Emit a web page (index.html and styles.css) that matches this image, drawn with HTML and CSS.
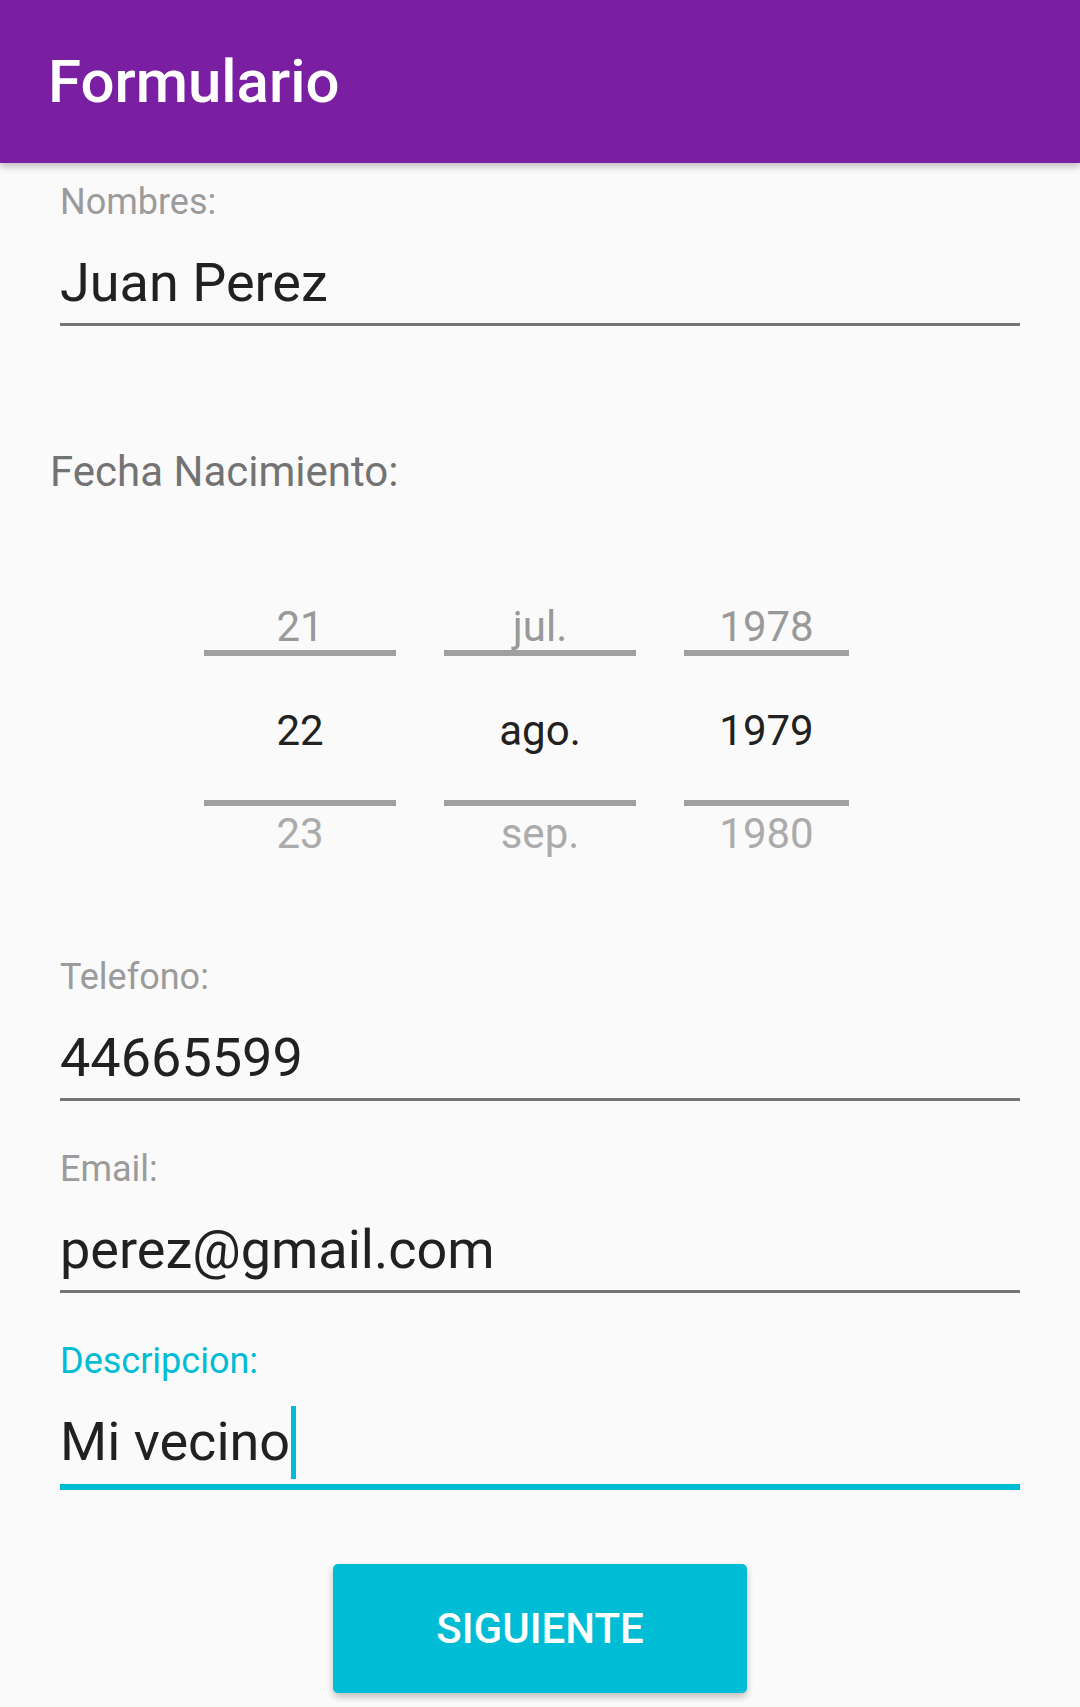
FILE: index.html
```html
<!DOCTYPE html>
<html lang="es">
<head>
<meta charset="utf-8">
<title>Formulario</title>
<link rel="stylesheet" href="styles.css">
</head>
<body>
<header class="appbar"><h1 class="appbar-title">Formulario</h1></header>
<main class="form">
  <div class="field field-first">
    <div class="field-label">Nombres:</div>
    <div class="field-input">Juan Perez</div>
  </div>

  <section class="date-section">
    <div class="date-label">Fecha Nacimiento:</div>
    <div class="picker">
      <div class="picker-col col-day">
        <div class="cell cell-prev">21</div>
        <div class="divider"></div>
        <div class="cell cell-current">22</div>
        <div class="divider"></div>
        <div class="cell cell-next">23</div>
      </div>
      <div class="picker-col col-month">
        <div class="cell cell-prev">jul.</div>
        <div class="divider"></div>
        <div class="cell cell-current">ago.</div>
        <div class="divider"></div>
        <div class="cell cell-next">sep.</div>
      </div>
      <div class="picker-col col-year">
        <div class="cell cell-prev">1978</div>
        <div class="divider"></div>
        <div class="cell cell-current">1979</div>
        <div class="divider"></div>
        <div class="cell cell-next">1980</div>
      </div>
    </div>
  </section>

  <div class="field field-phone">
    <div class="field-label">Telefono:</div>
    <div class="field-input">44665599</div>
  </div>

  <div class="field field-gap">
    <div class="field-label">Email:</div>
    <div class="field-input">perez@gmail.com</div>
  </div>

  <div class="field field-gap field-focused">
    <div class="field-label">Descripcion:</div>
    <div class="field-input">Mi vecino<span class="cursor"></span></div>
  </div>

  <button class="btn-next" type="button">SIGUIENTE</button>
</main>
</body>
</html>
```

FILE: styles.css
```css
* {
  box-sizing: border-box;
}

html, body {
  margin: 0;
  padding: 0;
}

body {
  background: #fafafa;
  font-family: Roboto, "Noto Sans", "Liberation Sans", sans-serif;
  color: #212121;
  width: 1080px;
  height: 1707px;
  overflow: hidden;
}

.appbar {
  position: relative;
  z-index: 2;
  height: 163px;
  background: #7b1fa2;
  box-shadow: 0 3px 8px rgba(0, 0, 0, 0.28);
  display: flex;
  align-items: center;
  padding-left: 48px;
}

.appbar-title {
  margin: 0;
  color: #ffffff;
  font-size: 60px;
  font-weight: 500;
  line-height: 163px;
}

.form {
  display: flex;
  flex-direction: column;
}

.field {
  margin: 0 60px;
  display: flex;
  flex-direction: column;
}

.field-first {
  margin-top: 15px;
}

.field-phone {
  margin-top: 92px;
}

.field-gap {
  margin-top: 44px;
}

.field-label {
  font-size: 36px;
  line-height: 48px;
  height: 48px;
  color: #9b9b9b;
}

.field-input {
  font-size: 54px;
  line-height: 64px;
  padding-top: 25px;
  padding-bottom: 8px;
  border-bottom: 3px solid #757575;
  color: #212121;
  white-space: nowrap;
}

.field-focused .field-label {
  color: #00bcd4;
}

.field-focused .field-input {
  border-bottom: 6px solid #00bcd4;
}

.cursor {
  display: inline-block;
  width: 5px;
  height: 73px;
  margin-left: 1px;
  margin-top: -7px;
  margin-bottom: -3px;
  vertical-align: -16px;
  background: #00bcd4;
}

.date-section {
  margin-top: 118px;
  display: flex;
  flex-direction: column;
}

.date-label {
  padding-left: 50px;
  font-size: 42px;
  line-height: 56px;
  height: 56px;
  color: #737373;
}

.picker {
  margin-top: 104px;
  padding-left: 204px;
  display: flex;
  gap: 48px;
}

.picker-col {
  display: flex;
  flex-direction: column;
  width: 192px;
  text-align: center;
  font-size: 42px;
}

.col-year {
  width: 165px;
}

.cell {
  white-space: nowrap;
}

.cell-prev {
  height: 46px;
  line-height: 46px;
  color: #999999;
}

.cell-current {
  height: 144px;
  padding-top: 5px;
  line-height: 139px;
  color: #212121;
}

.cell-next {
  height: 55px;
  line-height: 55px;
  color: #ababab;
}

.divider {
  height: 6px;
  background: #a0a0a0;
}

.btn-next {
  display: block;
  margin: 74px auto 0;
  width: 414px;
  height: 129px;
  border: none;
  border-radius: 5px;
  background: #00bcd4;
  color: #ffffff;
  font-family: Roboto, "Noto Sans", "Liberation Sans", sans-serif;
  font-size: 42px;
  font-weight: 500;
  line-height: 129px;
  padding: 0;
  box-shadow: 0 4px 7px rgba(0, 0, 0, 0.24);
}
```
